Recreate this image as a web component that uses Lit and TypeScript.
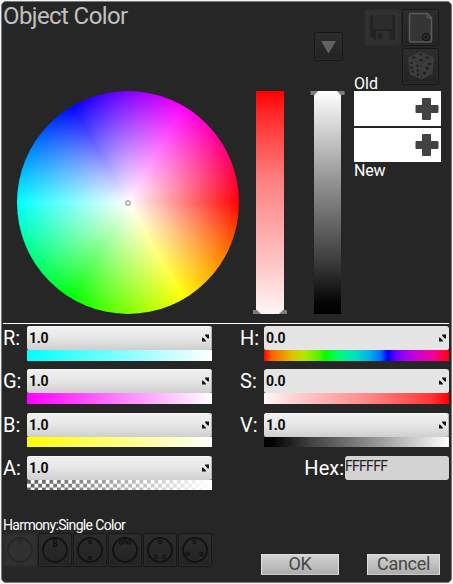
import { LitElement, html, css, svg } from "lit";
import { customElement, property } from "lit/decorators.js";
import { styleMap } from "lit/directives/style-map.js";

const text = css`
  .t { font-family: Roboto, "Open Sans", sans-serif; white-space: pre; }
`;

@customElement("spin-field")
class SpinField extends LitElement {
  static styles = [text, css`
    :host { display: flex; height: 43.3px; }
    .label { color: #fff; font-size: 20px; line-height: 24px; flex: none; }
    .body { width: 185px; margin-left: auto; }
    .box { height: 24px; box-sizing: border-box; padding: 0 2px 0 2px; display: flex; align-items: center; justify-content: space-between;
      background: linear-gradient(#f1f1f1, #e6e6e6 50%, #cfcfcf); border-radius: 3px 3px 2px 2px; box-shadow: inset -1px 0 #b5b5b5, inset 0 1px #f8f8f8; }
    .flat .box { background: #e5e5e5; box-shadow: none; }
    .value { color: #0c0c0c; font-size: 14px; font-weight: 700; line-height: 24px; letter-spacing: -.3px; }
    .strip { height: 10.500px; }
    .arrows { display: block; }
  `];
  @property() label = "";
  @property() value = "";
  @property() strip = "";
  @property({ type: Boolean }) flat = false;
  render() {
    return html`
      <div class="t label">${this.label}</div>
      <div class="body ${this.flat ? "flat" : ""}">
        <div class="box">
          <span class="t value">${this.value}</span>
          <svg class="arrows" width="9" height="10" viewBox="0 0 9 10">
            <path d="M4 1.500H8V5.500L6.800 5.400L4.300 2.900ZM1 4.500L2.200 4.700L4.700 7.200L5 8.500H1Z" fill="#111" />
          </svg>
        </div>
        <div class="strip" style=${styleMap({ background: this.strip })}></div>
      </div>`;
  }
}

const HUES = "#f00, #ff6000 4%, #f08c00 9%, #dfc000 15%, #b0e800 22%, #60f000 29%, #0f0 33.3%, #00ff50 38%, #00f0a0 44%, #00dcc8 50%, #00b0e8 57%, #0070ff 63%, #00f 66.7%, #6000ff 71%, #a800f0 77%, #d000d0 83%, #f000a0 91%, #ff0030 98%, #f00";

const LEFT = [
  ["R:", "linear-gradient(90deg, #0ff, #fff)"],
  ["G:", "linear-gradient(90deg, #f0f, #fff)"],
  ["B:", "linear-gradient(90deg, #ff0, #fff)"],
  ["A:", "linear-gradient(90deg, transparent, #fff), repeating-conic-gradient(#fff 0 25%, #5c5c5c 0 50%) 0 0 / 7.500px 7.500px"],
];

/* Marker positions inside each harmony circle, on a 34 x 34 button. */
const HARMONIES: number[][][] = [
  [[17, 9]],
  [[17, 8.5], [17, 12]],
  [[17, 9], [17, 25]],
  [[13, 9.5], [17, 8.5], [21, 9.5]],
  [[17, 9], [13, 24], [21, 24]],
  [[16.5, 9], [9.5, 21], [23.5, 21]],
];

@customElement("app-root")
class AppRoot extends LitElement {
  static styles = [text, css`
    :host { display: block; width: 453px; height: 584px; background: #f2f2f2; overflow: hidden; }
    .panel { box-sizing: border-box; width: 451px; height: 582px; margin-left: 1px; border: 1px solid #777b7a; border-radius: 5px;
      background: #262626; display: flex; flex-direction: column; padding-left: 1px; }
    .panel > * { flex: none; }
    .frame { padding-top: 1px; }
    .top { display: flex; height: 89px; }
    .title { color: #c0c0c0; font-size: 24px; line-height: 29px; letter-spacing: -.6px; width: 311px; flex: none; }
    .drop { margin-top: 30px; margin-right: 21px; flex: none; }
    .tools { display: grid; grid-template-columns: 37px 37px; grid-auto-rows: 37px; gap: 1.500px 1px; padding-top: 7px; }
    .btn { box-sizing: border-box; border: 1px solid #181818; border-radius: 2px; background: linear-gradient(#2c2c2c, #232323); box-shadow: inset 0 0 0 1px #2b2b2b; display: flex; }
    .btn svg { display: block; margin: -1px; }
    .off { background: #303030; border-color: #2d2d2d; }
    .small { width: 29px; height: 29px; }
    .dice { grid-column: 2; }
    .picker { display: flex; height: 232px; }
    .wheel { width: 222px; height: 223px; margin-left: 14px; border-radius: 50%; display: grid; place-items: center;
      background: radial-gradient(closest-side, #fff, rgba(255,255,255,0)),
        conic-gradient(from 90deg, #f00, #ff0 60deg, #0f0 120deg, #0ff 180deg, #00f 240deg, #f0f 300deg, #f00); }
    .bar { display: block; flex: none; }
    .sat { margin-left: 12px; }
    .val { margin-left: 20px; }
    .swatches { margin-left: 7px; width: 87px; color: #fff; font-size: 16px; line-height: 18px; }
    .old { margin-top: -16px; height: 16px; }
    .new { letter-spacing: -.2px; }
    .swatch { height: 35px; background: #fff; display: flex; justify-content: flex-end; align-items: center; margin-bottom: 2px; }
    .swatch + .swatch { height: 34px; margin-bottom: 0; }
    .rule { height: 1px; width: 446px; background: #fff; margin-bottom: 2px; }
    .fields { display: flex; justify-content: space-between; width: 446px; height: 191px; }
    .left { width: 209px; }
    .right { width: 209px; }
    .hexrow { display: flex; justify-content: flex-end; color: #fff; font-size: 20px; line-height: 24px; }
    .hex { width: 104px; height: 24px; background: #d3d3d3; border-radius: 3px; color: #222; font-size: 14px; line-height: 21px; margin-left: 1px; letter-spacing: -.7px; }
    .harmony { color: #fff; font-size: 14px; line-height: 16px; letter-spacing: -.65px; }
    .bottom { display: flex; height: 46px; }
    .modes { display: flex; gap: 1.100px; width: 258px; }
    .mode { width: 34px; height: 34px; flex: none; }
    .act { box-sizing: border-box; height: 21px; margin-top: 21px; border: 1px solid #dedede; border-bottom-color: #cacaca; background: linear-gradient(#d2d2d2, #adadad);
      color: #484848; font-size: 18px; line-height: 18px; text-align: center; letter-spacing: -.3px; }
    .ok { width: 78px; margin-right: 28px; }
    .cancel { width: 73px; }
  `];

  plus() {
    return html`<svg width="28" height="26" viewBox="0 0 28 26"><path d="M10 2H17Q18 2 18 3V9H24.500Q25.500 9 25.500 10V16Q25.500 17 24.500 17H18V23Q18 24 17 24H10Q9 24 9 23V17H3.500Q2.500 17 2.500 16V10Q2.500 9 3.500 9H9V3Q9 2 10 2Z" fill="#424242"/></svg>`;
  }

  render() {
    return html`<div class="frame"><div class="panel">
      <div class="top">
        <div class="t title">Object Color</div>
        <div class="btn small drop"><svg width="29" height="29"><path d="M7 9H22L14.500 21.500Z" fill="#626262"/></svg></div>
        <div class="tools">
          <div class="btn off"><svg width="37" height="37"><path d="M6 6H9V20H28V6H31V31H11L6 26.500Z" fill="#232323"/><path d="M9 6H28V20H9Z" fill="#2c2c2c"/><path d="M12 22H25V31H12Z" fill="#2f2f2f"/><path d="M14.500 24H18V30H14.500Z" fill="#232323"/><path d="M25 22H27V31H25Z" fill="#272727"/></svg></div>
          <div class="btn"><svg width="37" height="37"><path d="M9 4.500H25.500L29.500 8.500V31.500Q29.500 33 28 33H9Q7.500 33 7.500 31.500V6Q7.500 4.500 9 4.500Z" fill="#353535" stroke="#5c5c5c" stroke-width="1.500"/><path d="M25 5V9H29" fill="#444" stroke="#5c5c5c"/><circle cx="24" cy="28" r="3.700" fill="#303030" stroke="#151515" stroke-width="1.200"/><path d="M24 25.800V30.200M21.800 28H26.200" stroke="#151515" stroke-width="1.200"/></svg></div>
          <div class="btn dice"><svg width="37" height="37">
            <path d="M18.500 3.500L32 9L30.500 26L19.500 31.500L8 26.500L6 9.500Z" fill="#3d3d3d"/>
            <path d="M6 9.500L19 15L32 9M19 15L19.500 31.500" fill="none" stroke="#343434"/>
            <g fill="#1e1e1e"><ellipse cx="18.500" cy="6.500" rx="1.800" ry="1"/><ellipse cx="12" cy="9.500" rx="1.800" ry="1"/><ellipse cx="25" cy="9.500" rx="1.800" ry="1"/><ellipse cx="19" cy="12" rx="1.800" ry="1"/>
            <circle cx="9.500" cy="15" r="1.200"/><circle cx="15.500" cy="18" r="1.200"/><circle cx="10.500" cy="23.500" r="1.200"/><circle cx="16" cy="26.500" r="1.200"/><circle cx="9.800" cy="19.500" r="1.200"/><circle cx="15.800" cy="22.300" r="1.200"/>
            <circle cx="27.500" cy="16" r="1.600"/><circle cx="25" cy="20" r="1.600"/><circle cx="22.500" cy="25" r="1.600"/></g></svg></div>
        </div>
      </div>
      <div class="picker">
        <div class="wheel"><svg width="6" height="6"><rect x="1" y="1" width="4" height="4" rx="1" fill="#fff" stroke="#777"/></svg></div>
        <svg class="bar sat" width="38" height="223">
          <defs><linearGradient id="s" x2="0" y2="1"><stop stop-color="#f00"/><stop offset=".1" stop-color="#ff2828"/><stop offset=".4" stop-color="#ff8080"/><stop offset=".8" stop-color="#ffcaca"/><stop offset="1" stop-color="#fff6f6"/></linearGradient></defs>
          <rect x="5" width="28" height="223" fill="url(#s)"/><path d="M2 219H6L10 223H2ZM36 219H32L28 223H36Z" fill="#7c7c7c"/></svg>
        <svg class="bar val" width="38" height="223">
          <defs><linearGradient id="v" x2="0" y2="1"><stop stop-color="#fff"/><stop offset=".4" stop-color="#949494"/><stop offset=".75" stop-color="#404040"/><stop offset=".95" stop-color="#050505"/><stop offset="1" stop-color="#000"/></linearGradient></defs>
          <rect x="5" width="27" height="223" fill="url(#v)"/><path d="M1.500 0H9L5.500 4H1.500ZM35.500 0H28L31.500 4H35.500Z" fill="#7c7c7c"/></svg>
        <div class="swatches">
          <div class="t old">Old</div>
          <div class="swatch">${this.plus()}</div>
          <div class="swatch">${this.plus()}</div>
          <div class="t new">New</div>
        </div>
      </div>
      <div class="rule"></div>
      <div class="fields">
        <div class="left">${LEFT.map(([l, s]) => html`<spin-field label=${l} value="1.0" strip=${s}></spin-field>`)}</div>
        <div class="right">
          <spin-field flat label="H:" value="0.0" strip="linear-gradient(90deg, ${HUES})"></spin-field>
          <spin-field flat label="S:" value="0.0" strip="linear-gradient(90deg, #fff6f6, #ffcaca 20%, #ff8080 60%, #ff3838 90%, #f00)"></spin-field>
          <spin-field label="V:" value="1.0" strip="linear-gradient(90deg, #000, #040404 5%, #404040 25%, #949494 60%, #fff)"></spin-field>
          <div class="hexrow"><span class="t">Hex:</span><div class="t hex">FFFFFF</div></div>
        </div>
      </div>
      <div class="t harmony">Harmony:Single Color</div>
      <div class="bottom">
        <div class="modes">${HARMONIES.map((pts, i) => html`<div class="btn mode ${i === 0 ? "off" : ""}"><svg width="34" height="34" fill="none" stroke=${i === 0 ? "#262626" : "#121212"}>
          <circle cx="17" cy="17" r="12" stroke-width="1.800"/>${pts.map(([x, y]) => svg`<circle cx=${x} cy=${y} r="1.600" stroke-width="1.200"/>`)}</svg></div>`)}</div>
        <div class="t act ok">OK</div>
        <div class="t act cancel">Cancel</div>
      </div>
    </div></div>`;
  }
}
